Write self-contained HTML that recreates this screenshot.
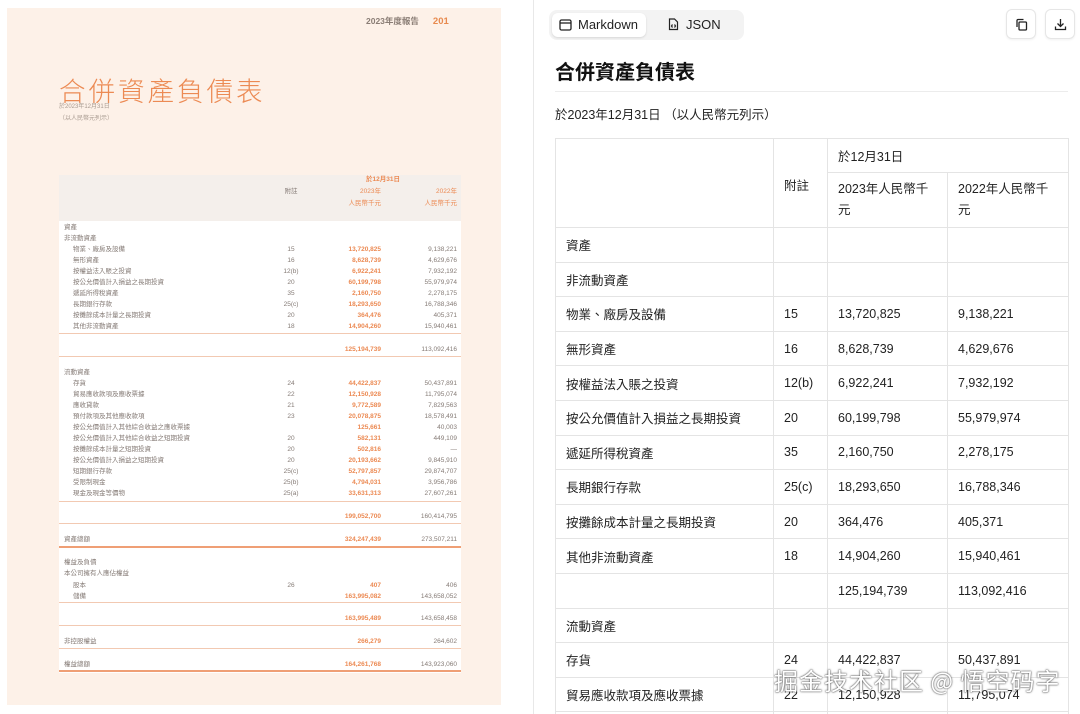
<!DOCTYPE html>
<html><head><meta charset="utf-8"><style>
*{margin:0;padding:0;box-sizing:border-box}
html,body{width:1080px;height:714px;overflow:hidden}
body{background:#fff;font-family:"Liberation Sans","Noto Sans CJK TC",sans-serif;position:relative}
#left{position:absolute;left:0;top:0;width:530px;height:714px;background:#fff}
#page{position:absolute;left:7px;top:8px;width:494px;height:697px;background:#fdf1e8}
.hdr{position:absolute;top:15px;left:366px;font-size:8.5px;color:#8a7d75;font-weight:bold}
.hdr b{color:#e88a4e;margin-left:14px;font-size:9.5px}
.title{position:absolute;left:59px;top:70px;font-size:26.5px;color:#ec8a53;letter-spacing:3px;font-family:"Noto Sans CJK TC",sans-serif;font-weight:300}
.sub{position:absolute;left:59px;font-size:6px;color:#a89a90}
.thead{position:absolute;left:59px;top:175px;width:402px;height:46px;background:#f4efeb}
.tbody{position:absolute;left:59px;top:221px;width:402px;height:452px;background:#fff}
.r{position:absolute;left:59px;width:402px;height:10px;font-size:6.5px;line-height:10px;color:#857b76}
.r span{position:absolute;top:0}
.l{left:5px}.l.i{left:14px}
.n{left:212px;width:40px;text-align:center}
.a{right:80px;color:#ec8a53;font-weight:bold}
.b{right:4px}
.o{color:#ec8a53}
.ln{position:absolute;left:59px;width:402px;height:1px;background:#f2c9b2}
.ln.t{height:2px;background:#ef9f75}
#div{position:absolute;left:533px;top:0;width:1px;height:714px;background:#e8e8e8}
.tabs{position:absolute;left:549px;top:10px;width:195px;height:30px;background:#f3f3f3;border-radius:8px}
.tab{position:absolute;top:3px;height:24px;font-size:13px;line-height:24px;color:#222}
.tab1{left:3px;width:94px;background:#fff;border-radius:6px;box-shadow:0 1px 2px rgba(0,0,0,.12);padding-left:26px}
.tab2{left:117px;padding-left:20px}
.btn{position:absolute;top:9px;width:30px;height:30px;border:1px solid #e6e6e6;border-radius:6px;background:#fff;box-shadow:0 1px 2px rgba(0,0,0,.06)}
h1{position:absolute;left:555px;top:56px;font-size:20px;font-weight:bold;color:#111;font-family:"Noto Sans CJK TC",sans-serif}
.hr{position:absolute;left:555px;top:91px;width:513px;height:1px;background:#ececec}
.date{position:absolute;left:555px;top:104px;font-size:12.5px;color:#222}
table{position:absolute;left:555px;top:138px;border-collapse:collapse;font-size:12.5px;color:#222;table-layout:fixed}
td{border:1px solid #e4e4e4;padding:0 10px;height:34.6px;vertical-align:middle}
.wm{position:absolute;left:774px;top:662px;font-size:24px;color:#fff;font-family:"Noto Sans CJK SC",sans-serif;text-shadow:0 0 2px #555,0 0 1px #333;letter-spacing:1px;white-space:nowrap}
</style></head><body>
<div id="left"><div id="page"></div>
<div class="hdr">2023年度報告<b>201</b></div>
<div class="title">合併資產負債表</div>
<div class="sub" style="top:101px">於2023年12月31日</div>
<div class="sub" style="top:113px">（以人民幣元列示）</div>
<div class="thead"></div><div class="tbody"></div>
<div class="r o" style="top:175px"><span style="left:307px;font-weight:bold">於12月31日</span></div>
<div class="r" style="top:187px"><span class="n">附註</span><span class="a" style="font-weight:normal">2023年</span><span class="b o">2022年</span></div>
<div class="r" style="top:199px"><span class="a" style="font-weight:normal">人民幣千元</span><span class="b o">人民幣千元</span></div>

<div class="r" style="top:223px"><span class="l">資產</span></div>
<div class="r" style="top:234px"><span class="l">非流動資產</span></div>
<div class="r" style="top:245px"><span class="l i">物業、廠房及設備</span><span class="n">15</span><span class="a">13,720,825</span><span class="b">9,138,221</span></div>
<div class="r" style="top:256px"><span class="l i">無形資產</span><span class="n">16</span><span class="a">8,628,739</span><span class="b">4,629,676</span></div>
<div class="r" style="top:267px"><span class="l i">按權益法入賬之投資</span><span class="n">12(b)</span><span class="a">6,922,241</span><span class="b">7,932,192</span></div>
<div class="r" style="top:278px"><span class="l i">按公允價值計入損益之長期投資</span><span class="n">20</span><span class="a">60,199,798</span><span class="b">55,979,974</span></div>
<div class="r" style="top:289px"><span class="l i">遞延所得稅資產</span><span class="n">35</span><span class="a">2,160,750</span><span class="b">2,278,175</span></div>
<div class="r" style="top:300px"><span class="l i">長期銀行存款</span><span class="n">25(c)</span><span class="a">18,293,650</span><span class="b">16,788,346</span></div>
<div class="r" style="top:311px"><span class="l i">按攤餘成本計量之長期投資</span><span class="n">20</span><span class="a">364,476</span><span class="b">405,371</span></div>
<div class="r" style="top:322px"><span class="l i">其他非流動資產</span><span class="n">18</span><span class="a">14,904,260</span><span class="b">15,940,461</span></div>
<div class="ln" style="top:333px"></div>
<div class="r" style="top:345px"><span class="a">125,194,739</span><span class="b">113,092,416</span></div>
<div class="ln" style="top:356px"></div>
<div class="r" style="top:368px"><span class="l">流動資產</span></div>
<div class="r" style="top:379px"><span class="l i">存貨</span><span class="n">24</span><span class="a">44,422,837</span><span class="b">50,437,891</span></div>
<div class="r" style="top:390px"><span class="l i">貿易應收款項及應收票據</span><span class="n">22</span><span class="a">12,150,928</span><span class="b">11,795,074</span></div>
<div class="r" style="top:401px"><span class="l i">應收貸款</span><span class="n">21</span><span class="a">9,772,589</span><span class="b">7,829,563</span></div>
<div class="r" style="top:412px"><span class="l i">預付款項及其他應收款項</span><span class="n">23</span><span class="a">20,078,875</span><span class="b">18,578,491</span></div>
<div class="r" style="top:423px"><span class="l i">按公允價值計入其他綜合收益之應收票據</span><span class="a">125,661</span><span class="b">40,003</span></div>
<div class="r" style="top:434px"><span class="l i">按公允價值計入其他綜合收益之短期投資</span><span class="n">20</span><span class="a">582,131</span><span class="b">449,109</span></div>
<div class="r" style="top:445px"><span class="l i">按攤餘成本計量之短期投資</span><span class="n">20</span><span class="a">502,816</span><span class="b">—</span></div>
<div class="r" style="top:456px"><span class="l i">按公允價值計入損益之短期投資</span><span class="n">20</span><span class="a">20,193,662</span><span class="b">9,845,910</span></div>
<div class="r" style="top:467px"><span class="l i">短期銀行存款</span><span class="n">25(c)</span><span class="a">52,797,857</span><span class="b">29,874,707</span></div>
<div class="r" style="top:478px"><span class="l i">受限制現金</span><span class="n">25(b)</span><span class="a">4,794,031</span><span class="b">3,956,786</span></div>
<div class="r" style="top:489px"><span class="l i">現金及現金等價物</span><span class="n">25(a)</span><span class="a">33,631,313</span><span class="b">27,607,261</span></div>
<div class="ln" style="top:501px"></div>
<div class="r" style="top:512px"><span class="a">199,052,700</span><span class="b">160,414,795</span></div>
<div class="ln" style="top:523px"></div>
<div class="r" style="top:535px"><span class="l">資產總額</span><span class="a">324,247,439</span><span class="b">273,507,211</span></div>
<div class="ln t" style="top:546px"></div>
<div class="r" style="top:558px"><span class="l">權益及負債</span></div>
<div class="r" style="top:569px"><span class="l">本公司擁有人應佔權益</span></div>
<div class="r" style="top:581px"><span class="l i">股本</span><span class="n">26</span><span class="a">407</span><span class="b">406</span></div>
<div class="r" style="top:592px"><span class="l i">儲備</span><span class="a">163,995,082</span><span class="b">143,658,052</span></div>
<div class="ln" style="top:602px"></div>
<div class="r" style="top:614px"><span class="a">163,995,489</span><span class="b">143,658,458</span></div>
<div class="ln" style="top:625px"></div>
<div class="r" style="top:637px"><span class="l">非控股權益</span><span class="a">266,279</span><span class="b">264,602</span></div>
<div class="ln" style="top:648px"></div>
<div class="r" style="top:660px"><span class="l">權益總額</span><span class="a">164,261,768</span><span class="b">143,923,060</span></div>
<div class="ln t" style="top:670px"></div>
</div>
<div id="div"></div>

<div class="tabs">
<div class="tab tab1"><svg style="position:absolute;left:7px;top:6px" width="13" height="12" viewBox="0 0 13 12" fill="none" stroke="#222" stroke-width="1.3"><rect x="1" y="1" width="11" height="10" rx="1.5"/><line x1="1" y1="4" x2="12" y2="4"/></svg>Markdown</div>
<div class="tab tab2"><svg style="position:absolute;left:2px;top:5px" width="11" height="13" viewBox="0 0 11 13" fill="none" stroke="#222" stroke-width="1.2"><path d="M1.5 1h5l3 3v7.5H1.5z"/><path d="M4.5 6.5l-1 1.5 1 1.5M6.5 6.5l1 1.5-1 1.5"/></svg>JSON</div>
</div>
<div class="btn" style="left:1006px"><svg style="position:absolute;left:8px;top:8px" width="13" height="13" viewBox="0 0 13 13" fill="none" stroke="#222" stroke-width="1.3"><rect x="4" y="4" width="7.5" height="8" rx="1"/><path d="M2 9V2.5A1 1 0 0 1 3 1.5h5.5"/></svg></div>
<div class="btn" style="left:1045px"><svg style="position:absolute;left:8px;top:8px" width="13" height="13" viewBox="0 0 13 13" fill="none" stroke="#222" stroke-width="1.3"><path d="M6.5 1v7.5M3.5 5.5l3 3 3-3M1.5 8.5v3h10v-3"/></svg></div>

<h1>合併資產負債表</h1>
<div class="hr"></div>
<div class="date">於2023年12月31日 （以人民幣元列示）</div>
<table>
<colgroup><col style="width:218px"><col style="width:54px"><col style="width:120px"><col style="width:121px"></colgroup>
<tr><td rowspan="2"></td><td rowspan="2" style="vertical-align:top;padding-top:36px">附註</td><td colspan="2" style="height:34px">於12月31日</td></tr>
<tr><td style="height:55px;line-height:21px">2023年人民幣千<br>元</td><td style="line-height:21px">2022年人民幣千<br>元</td></tr>
<tr><td>資產</td><td></td><td></td><td></td></tr>
<tr><td>非流動資產</td><td></td><td></td><td></td></tr>
<tr><td>物業、廠房及設備</td><td>15</td><td>13,720,825</td><td>9,138,221</td></tr>
<tr><td>無形資產</td><td>16</td><td>8,628,739</td><td>4,629,676</td></tr>
<tr><td>按權益法入賬之投資</td><td>12(b)</td><td>6,922,241</td><td>7,932,192</td></tr>
<tr><td>按公允價值計入損益之長期投資</td><td>20</td><td>60,199,798</td><td>55,979,974</td></tr>
<tr><td>遞延所得稅資產</td><td>35</td><td>2,160,750</td><td>2,278,175</td></tr>
<tr><td>長期銀行存款</td><td>25(c)</td><td>18,293,650</td><td>16,788,346</td></tr>
<tr><td>按攤餘成本計量之長期投資</td><td>20</td><td>364,476</td><td>405,371</td></tr>
<tr><td>其他非流動資產</td><td>18</td><td>14,904,260</td><td>15,940,461</td></tr>
<tr><td></td><td></td><td>125,194,739</td><td>113,092,416</td></tr>
<tr><td>流動資產</td><td></td><td></td><td></td></tr>
<tr><td>存貨</td><td>24</td><td>44,422,837</td><td>50,437,891</td></tr>
<tr><td>貿易應收款項及應收票據</td><td>22</td><td>12,150,928</td><td>11,795,074</td></tr>
<tr><td>應收貸款</td><td>21</td><td>9,772,589</td><td>7,829,563</td></tr>
</table>
<div class="wm">掘金技术社区 @ 悟空码字</div>
</body></html>
